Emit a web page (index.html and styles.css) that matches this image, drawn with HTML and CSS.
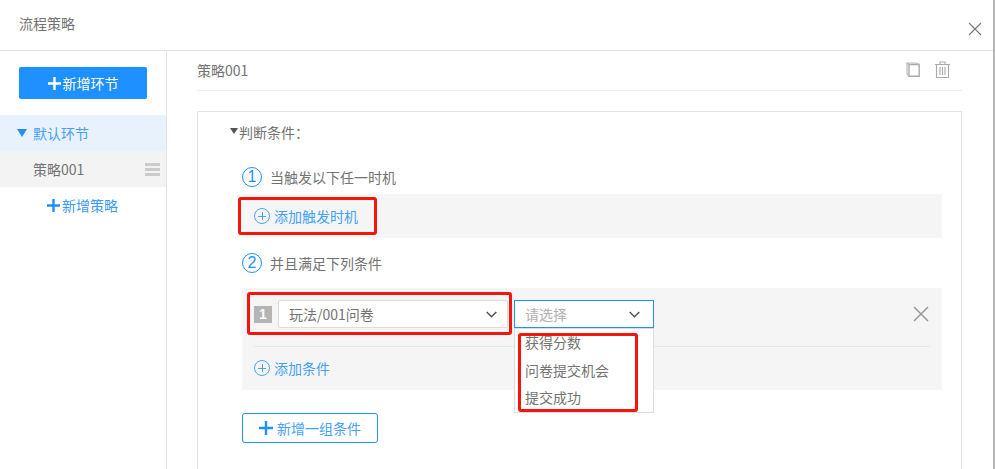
FILE: index.html
```html
<!DOCTYPE html>
<html lang="zh">
<head>
<meta charset="utf-8">
<title>流程策略</title>
<link rel="stylesheet" href="styles.css">
</head>
<body>
<div class="dialog">
  <header class="head">
    <span class="head-title">流程策略</span>
    <svg class="close" width="16" height="16" viewBox="0 0 16 16"><path d="M2 2l12 12M14 2L2 14" stroke="#777" stroke-width="1.1" fill="none"/></svg>
  </header>
  <div class="body">
    <aside class="side">
      <button class="add-stage"><svg class="plus" width="13" height="13" viewBox="0 0 13 13"><path d="M6.500 0v13M0 6.500h13" stroke="#fff" stroke-width="2.400"/></svg>新增环节</button>
      <div class="stage"><i class="tri"></i>默认环节</div>
      <div class="policy"><span>策略001</span><span class="burger"><i></i><i></i><i></i></span></div>
      <div class="add-policy"><svg class="plus" width="13" height="13" viewBox="0 0 13 13"><path d="M6.500 0v13M0 6.500h13" stroke="#1e90ff" stroke-width="2.400"/></svg>新增策略</div>
    </aside>
    <main class="main">
      <div class="title-row">
        <span>策略001</span>
        <span class="tools">
          <svg width="14" height="15" viewBox="0 0 14 15"><path d="M3 2.500h10.200v11.800H3z" fill="none" stroke="#aaa" stroke-width="1.400"/><path d="M3 2.500L1 1h9.500l2.500 1.500M1 1v11l2 2.300" fill="none" stroke="#bbb" stroke-width="1.200"/></svg>
          <svg width="15" height="17" viewBox="0 0 15 17"><path d="M0 3.500h15M5 3V1h5v2M1.500 3.500V16.500h12V3.500M5 6v8M7.500 6v8M10 6v8" fill="none" stroke="#aaa" stroke-width="1.100"/></svg>
        </span>
      </div>
      <section class="card">
        <div class="judge"><i class="tri-dark"></i>判断条件：</div>
        <div class="step"><span class="num">1</span>当触发以下任一时机</div>
        <div class="band trigger">
          <span class="add-link"><span class="circle-plus"></span>添加触发时机</span>
          <span class="red red-a"></span>
        </div>
        <div class="step step-2"><span class="num">2</span>并且满足下列条件</div>
        <div class="band conds">
          <div class="cond-row">
            <span class="badge">1</span>
            <span class="select sel-a">玩法/001问卷<svg class="chev" width="11" height="7" viewBox="0 0 11 7"><path d="M.7 1l4.800 4.800L10.300 1" fill="none" stroke="#555" stroke-width="1.500"/></svg></span>
            <span class="sel-wrap">
              <span class="select sel-b">请选择<svg class="chev" width="11" height="7" viewBox="0 0 11 7"><path d="M.7 1l4.800 4.800L10.300 1" fill="none" stroke="#555" stroke-width="1.500"/></svg></span>
              <span class="menu">
                <span class="opt">获得分数</span>
                <span class="opt">问卷提交机会</span>
                <span class="opt">提交成功</span>
                <span class="red red-c"></span>
              </span>
            </span>
            <svg class="row-x" width="16" height="16" viewBox="0 0 16 16"><path d="M1 1l14 14M15 1L1 15" stroke="#999" stroke-width="1.500" fill="none"/></svg>
            <span class="red red-b"></span>
          </div>
          <div class="divider"></div>
          <span class="add-link add-cond"><span class="circle-plus"></span>添加条件</span>
        </div>
        <button class="add-group"><svg class="plus" width="14" height="14" viewBox="0 0 14 14"><path d="M7 0v14M0 7h14" stroke="#1e90ff" stroke-width="2.400"/></svg>新增一组条件</button>
      </section>
    </main>
  </div>
</div>
</body>
</html>
```
FILE: styles.css
```css
* { box-sizing: border-box; }
html, body { margin: 0; height: 100%; overflow: hidden; background: #fff; }
body {
  font-family: "Noto Sans CJK SC", "Liberation Sans", sans-serif;
  font-size: 14px;
  color: #737373;
}
.dialog { width: 995px; height: 469px; display: flex; flex-direction: column; border-right: 2px solid #b4b4b4; overflow: hidden; }
.head {
  height: 51px;
  flex: none;
  border-bottom: 1px solid #e2e2e2;
  display: flex;
  justify-content: space-between;
  padding: 15px 12px 0 19px;
  margin-right: -2px;
}
.head-title { line-height: 17px; }
.close { margin-top: 6px; }
.body { flex: 1; display: flex; min-height: 0; }
.side { width: 167px; flex: none; border-right: 1px solid #e2e2e2; padding-top: 16px; }
.add-stage {
  display: flex; align-items: center; justify-content: center;
  width: 128px; height: 32px; margin: 0 0 16px 19px;
  background: #1e90ff; color: #fff; border: 0; border-radius: 2px;
  font: inherit; padding: 0;
}
.plus { margin-right: 2px; flex: none; }
.stage {
  height: 36px; background: #e8f2fc; color: #45a1fb;
  display: flex; align-items: center; padding-left: 17px;
}
.tri { width: 0; height: 0; border: 5px solid transparent; border-top: 8px solid #1e90ff; border-bottom: 0; margin-right: 6px; }
.policy {
  height: 36px; background: #f3f3f3;
  display: flex; align-items: center; justify-content: space-between; padding: 0 6px 0 33px;
}
.burger { display: flex; flex-direction: column; gap: 2px; }
.burger i { display: block; width: 15px; height: 3px; background: #cbcbcb; }
.add-policy { display: flex; align-items: center; height: 36px; padding-left: 47px; color: #3a9bfb; }
.main { flex: 1; padding: 0 31px 0 30px; min-width: 0; overflow: hidden; }
.title-row {
  height: 40px; border-bottom: 1px solid #ececec; padding-bottom: 2px;
  display: flex; align-items: center; justify-content: space-between;
}
.tools { display: flex; gap: 15px; padding-right: 12px; align-items: center; }
.card { margin-top: 20px; height: 400px; border: 1px solid #e2e2e2; padding: 10px 19px 0 44px; position: relative; }
.judge { display: flex; align-items: center; height: 20px; margin-left: -12px; }
.tri-dark { width: 0; height: 0; border: 4px solid transparent; border-top: 6px solid #555; border-bottom: 0; margin-right: 1px; margin-top: -3px; }
.step { display: flex; align-items: center; height: 22px; margin-top: 24px; }
.step-2 { margin-top: 14px; }
.num {
  width: 20px; height: 20px; border: 1px solid #1e90ff; border-radius: 50%;
  color: #1e90ff; font-size: 16px; line-height: 18px; text-align: center; margin-right: 8px;
  font-family: "Liberation Sans", sans-serif;
}
.band { background: #f5f5f5; position: relative; margin-top: 6px; }
.trigger { height: 44px; display: flex; align-items: center; padding-left: 12px; }
.add-link { display: inline-flex; align-items: center; color: #45a1fb; }
.circle-plus {
  width: 16px; height: 16px; border: 1px solid #4ba3fb; border-radius: 50%; margin-right: 4px; position: relative; flex: none;
  background:
    linear-gradient(#4ba3fb, #4ba3fb) center / 8px 1px no-repeat,
    linear-gradient(#4ba3fb, #4ba3fb) center / 1px 8px no-repeat;
}
.red { position: absolute; border: 3px solid #f5150b; border-radius: 3px; pointer-events: none; }
.red-a { left: -4px; top: 3px; width: 139px; height: 38px; }
.conds { height: 102px; padding: 12px 12px 0 12px; margin-top: 14px; }
.cond-row { display: flex; align-items: flex-start; position: relative; height: 46px; }
.badge {
  width: 18px; height: 17px; margin-top: 6px; margin-right: 6px; background: #b4b4b4; color: #fff;
  font: bold 14px/17px "Liberation Sans", sans-serif; text-align: center;
}
.select {
  height: 28px; background: #fff; border: 1px solid #dcdcdc; border-radius: 2px;
  display: flex; align-items: center; justify-content: space-between; padding: 0 10px;
}
.sel-a { width: 230px; }
.sel-wrap { position: relative; margin-left: 6px; width: 140px; }
.sel-b { width: 140px; border-color: #1e90ff; border-radius: 0; color: #b0b0b0; padding: 0 13px 0 10px; }
.menu {
  position: absolute; left: 0; top: 28px; width: 140px; height: 85px; background: #fff;
  border: 1px solid #dcdcdc; display: flex; flex-direction: column; padding: 0 0 0 10px; z-index: 2;
}
.opt { height: 28px; line-height: 26px; }
.red-b { left: -7px; top: -8px; width: 265px; height: 43px; }
.red-c { left: 3px; top: 4px; width: 120px; height: 79px; }
.row-x { position: absolute; left: 659px; top: 6px; }
.divider { height: 1px; background: #e8e8e8; margin: 0 0 13px 0; }
.add-cond { margin-top: -2px; }
.add-group {
  display: flex; align-items: center; justify-content: center;
  width: 136px; height: 30px; margin-top: 23px; background: #fff;
  border: 1px solid #1e90ff; border-radius: 3px; color: #45a1fb; font: inherit; padding: 0;
}
.add-group .plus { margin-right: 4px; }
```
